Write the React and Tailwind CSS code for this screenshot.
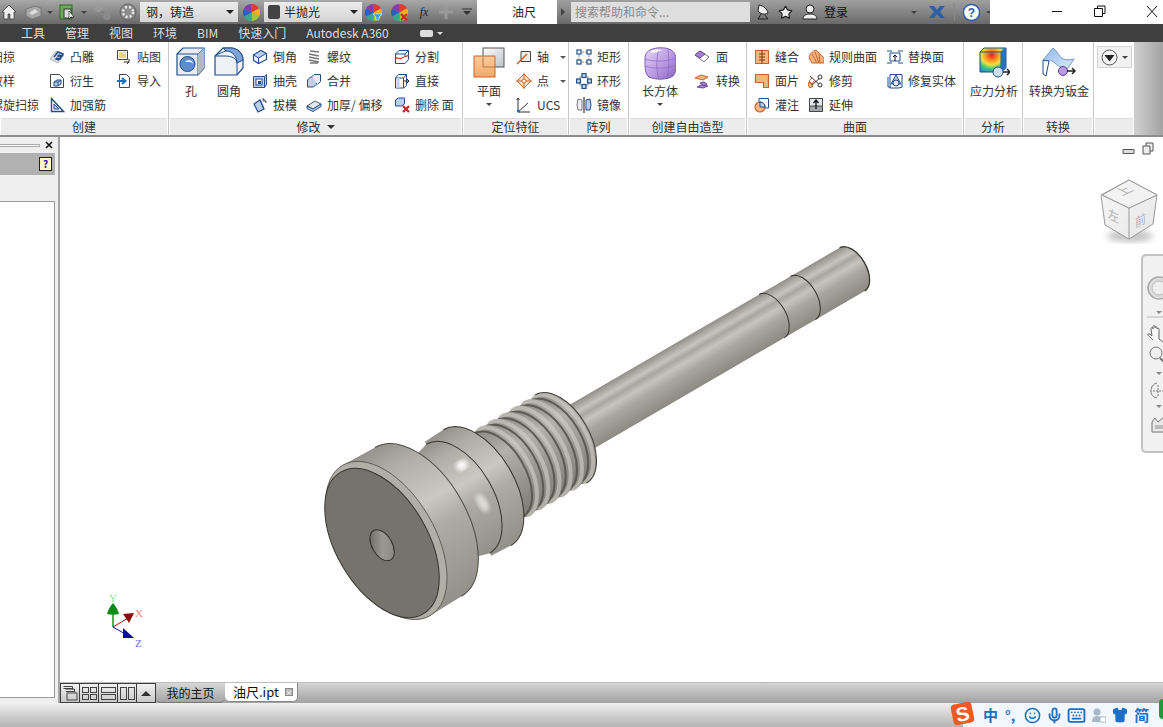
import React from "react";
import { Smile, Mic, Keyboard, Shirt, Star } from "lucide-react";

const B = "#1f4e8c", L = "#bcd0ea", O = "#c9652b", OF = "#f6b47f", G = "#8a8a8a";
const S = ({ s = 16, children, className = "" }) => (
  <svg width={s} height={s} viewBox={`0 0 ${s} ${s}`} className={"shrink-0 " + className} fill="none">{children}</svg>
);

const I = {
  emboss: <S><path d="M1 10l6-8 8 4-6 8z" fill="#dfe4ea" stroke="#888" strokeWidth=".6" /><path d="M5 8l4-5 5 2-1 2-3-1-1 1 3 1-1 2-3-1-1 1 3 1" stroke={B} strokeWidth="1.5" /></S>,
  derive: <S><path d="M1.5 1.5h9l4 4v9h-13z" fill="#fff" stroke="#444" /><path d="M5 9l3-2h4v4l-3 2H5z" fill={L} stroke={B} /><path d="M5 9h4v4M9 9l3-2" stroke={B} /></S>,
  rib: <S><path d="M2.5 1.5v13h12z" fill="#fff" stroke={B} strokeWidth="1.4" /><path d="M5 7v5h5z" fill={L} stroke={B} /></S>,
  decal: <S><path d="M1.5 1.5h10v9h-10z" fill="#fff" stroke="#444" /><rect x="3" y="3" width="7" height="6" fill="#e8d879" /><circle cx="8" cy="4.5" r="1.4" fill="#fff" stroke="#999" strokeWidth=".5" /><path d="M8 13h5m0-3v3m-2 2l2-2" stroke="#222" /></S>,
  imp: <S><path d="M3.5 1.5h7l3 3v10h-10z" fill="#fff" stroke="#444" /><path d="M1 8h7M6 5l3.5 3L6 11" stroke="#1f6fc0" strokeWidth="2" /></S>,
  chamfer: <S><path d="M1.5 6L9 1.5l5.5 3v6L6.5 14.5l-5-3z" fill="#f4f6f9" stroke={B} strokeWidth="1.2" /><path d="M1.5 6l5 3L14 4.5 9 1.5z" fill={L} stroke={B} /><path d="M6.5 9v5.5" stroke={B} /></S>,
  thread: <S><path d="M4 2l9 1M3 5l10 2M3 8l10 2M3 11l10 2M4 14l8-0" stroke="#777" strokeWidth="1.5" /></S>,
  split: <S><path d="M1.5 5L5 1.5h9.5v9L11 14.5H1.5z" fill="#fff" stroke={B} /><path d="M1.5 5H11l3.5-3.5M11 5v3" stroke={B} /><path d="M1 10c3-3 4 1 7-1s4-1 7-3" stroke="#d0302a" strokeWidth="1.2" /></S>,
  shell: <S><path d="M1.5 3.5h11v11h-11zM12.5 3.5l2-2v10l-2 3" fill={L} stroke={B} /><rect x="4" y="6" width="6" height="6" fill="#fff" stroke={B} /><rect x="6" y="8" width="3" height="3" fill={B} /></S>,
  combine: <S><path d="M1.5 7l3-3h6v7l-3 3h-6z" fill={L} stroke={B} /><path d="M6 3.5l2-2h6.5v7l-3 3" fill="#e6edf6" stroke={B} /></S>,
  direct: <S><path d="M1.5 5l3-3.5h8v11l-3 2.5h-8z" fill="#fff" stroke={B} /><path d="M1.5 5h8v10M9.5 5l3-3.5" stroke={B} /><path d="M4 5v10" stroke={L} strokeWidth="3" /><path d="M10 8h5m-2-2l2 2-2 2" stroke="#222" /></S>,
  draft: <S><path d="M2 7l6-4 4 9-6 3z" fill={L} stroke={B} strokeWidth="1.2" /><path d="M8 3l4 9" stroke={B} /><path d="M11 2c2 1 3 2 3 4" stroke="#333" /><path d="M11 1v3h3" stroke="#333" strokeWidth=".7" /></S>,
  thick: <S><path d="M1 9l8-5 6 3-8 5z" fill="#e0e8f2" stroke="#555" /><path d="M1 9v2.5l6 3 8-5V7l-8 5z" fill={L} stroke={B} /></S>,
  del: <S><path d="M1.5 3l3-2h6v6l-3 2h-6z" fill={L} stroke={B} /><path d="M9 9l6 6M15 9l-6 6" stroke="#d0202a" strokeWidth="2.2" /></S>,
  axis: <S><path d="M5 2.5h9.5v10H5" fill="#eee" stroke="#444" /><path d="M5 2.5v10" stroke="#444" /><path d="M1 15L11 5" stroke={O} strokeWidth="1.6" /></S>,
  point: <S><path d="M8 1l7 7-7 7-7-7z" fill="#fbe2c8" stroke={O} /><path d="M0 8h16M8 0v16" stroke={O} /><circle cx="8" cy="8" r="2" fill="#fff" stroke={O} /></S>,
  ucs: <S><path d="M2 15V2M2 15h12M2 15L12 6" stroke="#333" /><circle cx="2.5" cy="14" r="1.5" fill="#2068c8" /><path d="M.5 3L2 1l1.5 2" stroke="#333" /></S>,
  rect: <S><path d="M3 3h10M3 13h10M3 3v10M13 3v10" stroke="#888" strokeDasharray="2 1" /><g fill="#fff" stroke={B} strokeWidth="1.2"><rect x="1" y="1" width="4" height="4" /><rect x="11" y="1" width="4" height="4" /><rect x="1" y="11" width="4" height="4" /><rect x="11" y="11" width="4" height="4" /></g></S>,
  circ: <S><circle cx="8" cy="8" r="5.5" stroke="#777" /><g fill={L} stroke={B} strokeWidth="1.2"><rect x="6" y="0.5" width="4" height="4" /><rect x="0.5" y="6" width="4" height="4" /><rect x="11.5" y="6" width="4" height="4" /><rect x="6" y="11.5" width="4" height="4" /></g></S>,
  mirror: <S><path d="M8 0v16" stroke="#111" /><path d="M6 3L2 2 1 8l1 5h4z" fill="#eef" stroke="#777" /><path d="M10 3l4-1 1 6-1 5h-4z" fill={L} stroke={B} /></S>,
  face: <S><path d="M1 6l5-4 9 6-5 5z" fill="#fff" stroke="#777" /><path d="M1 6l5-4 5 3-5 4z" fill="#a77fd0" stroke="#6b4a9a" /></S>,
  convert: <S><path d="M1 5l6-3 7 2-5 3z" fill={OF} stroke={O} /><path d="M6 10l4-1 3 2-3 2z" fill="#a77fd0" stroke="#6b4a9a" /><path d="M3 14l4-2 7 1-5 2z" fill="#a77fd0" stroke="#6b4a9a" /></S>,
  stitch: <S><rect x="1.5" y="1.5" width="13" height="13" fill={OF} stroke={O} /><path d="M8 1v14M5 5h6M5 8h6M5 11h6" stroke="#7a3a10" /></S>,
  patch: <S><path d="M1.5 1.5h13v13h-5v-5h-8z" fill={OF} stroke={O} strokeWidth="1.2" /></S>,
  sculpt: <S><circle cx="6" cy="10" r="5" fill={OF} stroke={O} strokeWidth="1.2" /><path d="M5 1.5h9.5V11H11A5 5 0 0 0 5 5.2z" fill="#fff" stroke={B} /><path d="M6 5a5 5 0 0 1 5 5H6z" fill={L} stroke={B} /></S>,
  ruled: <S><path d="M1 9C2 4 5 2 8 1l8 8v5H4z" fill={OF} stroke={O} /><path d="M4 5l5 9M7 3l4 11M11 5l1 9" stroke={O} /></S>,
  trim: <S><path d="M2 14L14 3M2 3l12 11" stroke="#333" /><circle cx="12" cy="12" r="2" fill="#fff" stroke="#333" /><circle cx="12" cy="4" r="2" fill="#fff" stroke="#333" /><path d="M1 9l4 4-3 2-2-3z" fill={OF} stroke={O} /><path d="M4 5L1 8l3 3 2-3" stroke={O} /></S>,
  extend: <S><rect x="1.5" y="1.5" width="13" height="13" fill="#e4e8ee" stroke="#445" /><rect x="1.5" y="9" width="13" height="5.5" fill="#a8a8a8" stroke="#445" /><path d="M8 12V4M5.5 6L8 3l2.5 3" stroke="#111" strokeWidth="1.3" /></S>,
  replace: <S><path d="M3 4h10v8H3z" fill="#fff" stroke={B} /><path d="M0 2h5M11 2h5M0 14h5M11 14h5" stroke={B} /><path d="M8 12V6M6 8l2-2 2 2" stroke="#111" /></S>,
  repair: <S><path d="M3 1.5h12V14L12 15H3z" fill="#fff" stroke={B} /><path d="M1 4v10h3" stroke={B} /><path d="M9 2l-5 9h10z" fill={L} stroke={B} /><circle cx="9" cy="10" r="3" fill="#dfe8f4" stroke={B} /></S>,
};

const SmallItem = ({ icon, text, gap = "gap-[5px]", arrow }) => (
  <div className={"flex items-center h-[24px] whitespace-nowrap " + gap}>
    {I[icon]}
    <span>{text}</span>
    {arrow && <span className="ml-[6px] w-0 h-0 border-x-[3px] border-x-transparent border-t-[3px] border-t-[#555]" />}
  </div>
);

const Col = ({ className = "", children }) => <div className={"flex flex-col shrink-0 " + className}>{children}</div>;

const Large = ({ className = "", icon, label, drop }) => (
  <div className={"flex flex-col items-center shrink-0 " + className}>
    <div className="h-[36px] flex items-start justify-center pt-[2px]">{icon}</div>
    <div className="h-[20px] leading-[20px] whitespace-nowrap">{label}</div>
    {drop && <span className="mt-[2px] w-0 h-0 border-x-[3px] border-x-transparent border-t-[3px] border-t-[#444]" />}
  </div>
);

const Panel = ({ className = "", label, arrow, children, inner = "" }) => (
  <div className={"flex flex-col shrink-0 overflow-hidden border-r border-[#c9c9c9] " + className}>
    <div className={"h-[76px] flex pt-[3px] bg-white " + inner}>{children}</div>
    <div className="h-[17px] mx-[1px] bg-[#ececec] border-t border-[#dcdcdc] flex items-center justify-center gap-[6px] text-[12px] text-[#333]">
      {label}
      {arrow && <span className="w-0 h-0 border-x-[4px] border-x-transparent border-t-[4px] border-t-[#333]" />}
    </div>
  </div>
);

const HoleIcon = (
  <svg width="30" height="30" viewBox="0 0 30 30" fill="none"><path d="M1 7l6-6h21v20l-6 7H1z" fill="#e8ecf2" stroke={B} strokeWidth="1.2" /><path d="M1 7h21l6-6M22 7v21" stroke={B} /><path d="M22 7l6-6v20l-6 7z" fill="#b3b8c2" /><circle cx="11.5" cy="17" r="7.5" fill="#5f8dcc" stroke={B} /><path d="M9 14a6 4 0 0 1 7 0l1 3a5 4 0 0 0-6-2z" fill="#fff" /></svg>
);
const FilletIcon = (
  <svg width="30" height="30" viewBox="0 0 30 30" fill="none"><path d="M1 9L9 1h8c6 0 12 5 12 12v8l-6 7H1z" fill="#eef1f6" stroke={B} strokeWidth="1.2" /><path d="M9 1h8c6 0 12 5 12 12l-6 3c0-7-5-12-11-12z" fill="#7ea4d8" stroke={B} /><path d="M1 9c5-3 8-4 11-5M1 9h10c6 0 12 2 12 7v12" stroke={B} /></svg>
);
const PlaneIcon = (
  <svg width="32" height="32" viewBox="0 0 32 32" fill="none"><rect x="10" y="1" width="21" height="19" fill="url(#pg)" stroke="#555" /><rect x="1" y="9" width="21" height="21" fill="url(#po)" stroke={O} /><path d="M10 9v11h12" stroke="#a87a50" /><defs><linearGradient id="pg" x1="0" y1="0" x2="1" y2="1"><stop stopColor="#fff" /><stop offset="1" stopColor="#bcc2cc" /></linearGradient><linearGradient id="po" x1="0" y1="0" x2="0" y2="1"><stop stopColor="#fbcb9c" /><stop offset="1" stopColor="#f3a868" /></linearGradient></defs></svg>
);
const BoxIcon = (
  <svg width="32" height="33" viewBox="0 0 32 33" fill="none"><defs><linearGradient id="bx" x1="0" y1="0" x2="1" y2="1"><stop stopColor="#e5d6f6" /><stop offset=".6" stopColor="#b593e0" /><stop offset="1" stopColor="#8a63bf" /></linearGradient></defs><path d="M6 3c6-3 16-3 21 0 4 2 5 6 5 12s0 11-3 14c-5 4-18 4-24 1C1 27 1 21 1 15S1 6 6 3z" fill="url(#bx)" stroke="#7e5bb0" /><path d="M1 12c9 3 21 3 31-1M15 2c-3 9-3 21 0 30M24 2c1 9 1 20-1 29M1 19c9 3 21 3 30-1" stroke="#8a6bbf" strokeOpacity=".7" /><path d="M7 4c4-2 8-2 11-1-3 2-8 3-12 3z" fill="#fff" opacity=".8" /></svg>
);
const StressIcon = (
  <svg width="32" height="33" viewBox="0 0 32 33" fill="none"><defs><radialGradient id="st" cx=".45" cy=".3" r=".8"><stop stopColor="#e82020" /><stop offset=".3" stopColor="#f59a20" /><stop offset=".5" stopColor="#f0e040" /><stop offset=".7" stopColor="#40c880" /><stop offset="1" stopColor="#2080e0" /></radialGradient></defs><path d="M2 5l4-4h22v20l-5 4H2z" fill="url(#st)" stroke={B} /><path d="M2 5h21l5-4M23 5v20" stroke={B} /><path d="M23 5l5-4v20l-5 4z" fill="#2a70c0" /><circle cx="20" cy="25" r="5" fill="#cfe0f2" stroke={B} /><path d="M25 25h6m-2-3l3 3-3 3" stroke="#222" strokeWidth="1.5" /></svg>
);
const SheetIcon = (
  <svg width="34" height="33" viewBox="0 0 34 33" fill="none"><defs><linearGradient id="sh" x1="0" y1="0" x2="1" y2="1"><stop stopColor="#8fb8e8" /><stop offset="1" stopColor="#dceafa" /></linearGradient></defs><path d="M1 13L11 1c4 2 6 9 10 11 3 1 7 1 11 0l-6 9c-5 1-9-1-13-5-2-2-5-3-7-2z" fill="url(#sh)" stroke="#7a9cc8" /><path d="M1 13l6 1-3 15-3-2z" fill="#fff" stroke={B} /><circle cx="21" cy="24" r="4.5" fill="#b79ae0" stroke="#5a3a9a" /><path d="M25 24h7m-2-3l3 3-3 3" stroke="#222" strokeWidth="1.5" /></svg>
);

const Ribbon = () => (
  <div className="h-[93px] flex text-[12px] text-[#333]">
    <Panel className="w-[169px]" label="创建">
      <Col className="w-[58px] ml-[-9px]">
        <div className="h-[24px] leading-[24px]">扫掠</div>
        <div className="h-[24px] leading-[24px]">放样</div>
        <div className="h-[24px] leading-[24px] whitespace-nowrap">螺旋扫掠</div>
      </Col>
      <Col className="w-[67px]"><SmallItem icon="emboss" text="凸雕" /><SmallItem icon="derive" text="衍生" /><SmallItem icon="rib" text="加强筋" /></Col>
      <Col><SmallItem icon="decal" text="贴图" /><SmallItem icon="imp" text="导入" /></Col>
    </Panel>
    <Panel className="w-[294px]" label="修改" arrow inner="pl-[7px]">
      <Large className="w-[30px] mr-[8px]" icon={HoleIcon} label="孔" />
      <Large className="w-[30px] mr-[8px]" icon={FilletIcon} label="圆角" />
      <Col className="w-[54px]"><SmallItem icon="chamfer" text="倒角" /><SmallItem icon="shell" text="抽壳" /><SmallItem icon="draft" text="拔模" /></Col>
      <Col className="w-[88px]"><SmallItem icon="thread" text="螺纹" /><SmallItem icon="combine" text="合并" /><SmallItem icon="thick" text="加厚/ 偏移" /></Col>
      <Col><SmallItem icon="split" text="分割" /><SmallItem icon="direct" text="直接" /><SmallItem icon="del" text="删除 面" /></Col>
    </Panel>
    <Panel className="w-[106px]" label="定位特征" inner="pl-[10px]">
      <Large className="w-[32px] mr-[11px]" icon={PlaneIcon} label="平面" drop />
      <Col><SmallItem icon="axis" text="轴" arrow /><SmallItem icon="point" text="点" arrow /><SmallItem icon="ucs" text="UCS" /></Col>
    </Panel>
    <Panel className="w-[60px]" label="阵列" inner="pl-[7px]">
      <Col><SmallItem icon="rect" text="矩形" /><SmallItem icon="circ" text="环形" /><SmallItem icon="mirror" text="镜像" /></Col>
    </Panel>
    <Panel className="w-[118px]" label="创建自由造型" inner="pl-[15px]">
      <Large className="w-[32px] mr-[18px]" icon={BoxIcon} label="长方体" drop />
      <Col><SmallItem icon="face" text="面" gap="gap-[6px]" /><SmallItem icon="convert" text="转换" gap="gap-[6px]" /></Col>
    </Panel>
    <Panel className="w-[217px]" label="曲面" inner="pl-[7px]">
      <Col className="w-[54px]"><SmallItem icon="stitch" text="缝合" /><SmallItem icon="patch" text="面片" /><SmallItem icon="sculpt" text="灌注" /></Col>
      <Col className="w-[79px]"><SmallItem icon="ruled" text="规则曲面" /><SmallItem icon="trim" text="修剪" /><SmallItem icon="extend" text="延伸" /></Col>
      <Col><SmallItem icon="replace" text="替换面" /><SmallItem icon="repair" text="修复实体" /></Col>
    </Panel>
    <Panel className="w-[59px]" label="分析" inner="pl-[14px]">
      <Large className="w-[32px]" icon={StressIcon} label="应力分析" />
    </Panel>
    <Panel className="w-[71px]" label="转换" inner="pl-[19px]">
      <Large className="w-[34px]" icon={SheetIcon} label="转换为钣金" />
    </Panel>
    <Panel className="w-[41px]" label="" inner="pl-[3px]">
      <div className="w-[35px] h-[22px] mt-[1px] bg-[#f2f2f2] border border-[#d4d4d4] flex items-center justify-center gap-[4px]">
        <svg width="17" height="17" viewBox="0 0 17 17" fill="none"><circle cx="8.5" cy="8.5" r="7.5" fill="#f4f4f4" stroke="#555" /><path d="M3.5 6h10l-5 6.5z" fill="#222" /></svg>
        <span className="w-0 h-0 border-x-[3px] border-x-transparent border-t-[3px] border-t-[#444]" />
      </div>
    </Panel>
    <div className="flex-1 bg-gradient-to-r from-[#cfcfcf] to-[#a3a3a3]" />
  </div>
);

const Caret = () => <span className="block w-0 h-0 border-x-[3px] border-x-transparent border-t-[3px] border-t-[#444]" />;
const Wheel = ({ badge }) => (
  <svg width="17" height="17" viewBox="0 0 17 17" className="shrink-0">
    <path d="M8.5 8.5V0A8.5 8.5 0 0 1 16 4.5z" fill="#e23b2e" /><path d="M8.5 8.5L16 4.5A8.5 8.5 0 0 1 16 12.5z" fill="#f3b21c" /><path d="M8.5 8.5L16 12.5A8.5 8.5 0 0 1 8.5 17z" fill="#a0c83a" /><path d="M8.5 8.5V17A8.5 8.5 0 0 1 1 12.5z" fill="#36a890" /><path d="M8.5 8.5L1 12.5A8.5 8.5 0 0 1 1 4.5z" fill="#2a5fc0" /><path d="M8.5 8.5L1 4.5A8.5 8.5 0 0 1 8.5 0z" fill="#8a3aa8" />
    {badge === "funnel" && <path d="M8 10h9l-3 3v3h-3v-3z" fill="#3aa0e0" stroke="#fff" strokeWidth=".5" />}
    {badge === "x" && <path d="M10 10l6 6M16 10l-6 6" stroke="#d8202a" strokeWidth="2" />}
  </svg>
);
const Combo = ({ className = "", icon, text }) => (
  <div className={"h-[20px] shrink-0 flex items-center pr-[4px] bg-gradient-to-b from-[#ececec] to-[#d4d4d4] text-[12px] text-[#222] whitespace-nowrap " + className}>
    {icon}
    <span className="flex-1">{text}</span>
    <span className="w-0 h-0 border-x-[4px] border-x-transparent border-t-[4px] border-t-[#222]" />
  </div>
);

const TitleBar = () => (
  <div className="h-[24px] flex text-[12px]">
    <div className="w-[477px] shrink-0 bg-gradient-to-b from-[#a8a8a8] to-[#6a6a6a] flex items-center">
      <svg width="16" height="16" viewBox="0 0 16 16" className="ml-[1px] shrink-0"><path d="M1 8l7-7 7 7-2 0v7H9v-5H7v5H3V8z" fill="#f0f0f0" stroke="#333" strokeWidth=".7" /></svg>
      <svg width="18" height="15" viewBox="0 0 18 15" className="ml-[8px] shrink-0"><path d="M1 4l9-3 6 2v8l-9 3-6-3z" fill="#a8a8a8" stroke="#777" /><path d="M4 8l6-4 3 3-6 3z" fill="#ddd" /></svg>
      <span className="ml-[4px]"><Caret /></span>
      <svg width="17" height="17" viewBox="0 0 17 17" className="ml-[6px] shrink-0"><rect x="1" y="1" width="12" height="14" fill="#6fa85a" stroke="#2f6a2a" /><rect x="5" y="5" width="7" height="9" fill="#ddd" stroke="#333" /><path d="M10 7v8l2-2h3z" fill="#fff" stroke="#111" strokeWidth=".6" /></svg>
      <span className="ml-[5px]"><Caret /></span>
      <svg width="19" height="18" viewBox="0 0 19 18" className="ml-[7px] shrink-0"><circle cx="5" cy="5" r="4" fill="#9a9a9a" /><circle cx="13" cy="13" r="4" fill="#8a8a8a" /><path d="M7 8l3 2" stroke="#777" /></svg>
      <svg width="18" height="18" viewBox="0 0 18 18" className="ml-[6px] shrink-0"><circle cx="9" cy="9" r="8" fill="#8c8c8c" stroke="#666" /><circle cx="9" cy="9" r="5" fill="none" stroke="#e8e8e8" strokeWidth="2.5" strokeDasharray="2 2" /></svg>
      <Combo className="w-[98px] ml-[3px] pl-[6px]" text="钢，铸造" />
      <span className="ml-[5px] flex"><Wheel /></span>
      <Combo className="w-[98px] ml-[4px] pl-[4px]" text="半抛光" icon={<span className="w-[12px] h-[14px] mr-[4px] bg-[#444] rounded-[2px]" />} />
      <span className="ml-[3px] flex"><Wheel badge="funnel" /></span>
      <span className="ml-[9px] flex"><Wheel badge="x" /></span>
      <span className="ml-[6px] w-[20px] text-center text-[#222] italic" style={{ fontFamily: "'Liberation Serif',serif" }}>fx</span>
      <svg width="16" height="16" viewBox="0 0 16 16" className="ml-[4px] shrink-0"><path d="M8 1v14M1 8h14" stroke="#9a9a9a" strokeWidth="3" /></svg>
      <svg width="10" height="8" viewBox="0 0 10 8" className="ml-[8px] shrink-0"><path d="M0 1h10" stroke="#333" /><path d="M1 3h8L5 7z" fill="#333" /></svg>
    </div>
    <div className="w-[80px] shrink-0 bg-white text-[#222] flex items-center justify-center pl-[14px]">油尺</div>
    <div className="w-[433px] shrink-0 bg-gradient-to-b from-[#a0a0a0] to-[#6a6a6a] flex items-center whitespace-nowrap">
      <span className="ml-[4px] w-0 h-0 border-y-[4px] border-y-transparent border-l-[4px] border-l-[#444]" />
      <div className="ml-[6px] w-[179px] shrink-0 h-[20px] bg-[#dedede] text-[#888] flex items-center pl-[4px]">搜索帮助和命令...</div>
      <svg width="16" height="16" viewBox="0 0 16 16" className="ml-[6px] shrink-0"><path d="M3 1c5 1 8 4 9 8-3 2-8 1-10-2z" fill="#eee" stroke="#222" /><path d="M5 10l-3 5h10l-3-4" fill="none" stroke="#222" /></svg>
      <Star size={15} className="ml-[6px] shrink-0" fill="#eee" stroke="#222" />
      <svg width="16" height="16" viewBox="0 0 16 16" className="ml-[9px] shrink-0"><circle cx="8" cy="5" r="4" fill="#eee" stroke="#222" /><path d="M1 15c0-4 4-5 7-5s7 1 7 5z" fill="#eee" stroke="#222" /></svg>
      <span className="ml-[6px] text-[#111] shrink-0">登录</span>
      <span className="ml-[63px] shrink-0"><Caret /></span>
      <svg width="16" height="14" viewBox="0 0 16 14" className="ml-[12px] shrink-0"><path d="M0 1h5l3 4 3-4h5l-5 6 5 6h-5L8 9l-3 4H0l5-6z" fill="#2d5fa8" /></svg>
      <span className="ml-[9px] w-px h-[18px] bg-[#888] shrink-0" />
      <svg width="17" height="17" viewBox="0 0 17 17" className="ml-[8px] shrink-0"><circle cx="8.5" cy="8.5" r="8" fill="#fff" stroke="#2d5fa8" strokeWidth="1.4" /><text x="8.5" y="13" fontSize="12" fontWeight="700" textAnchor="middle" fill="#2d5fa8" fontFamily="Liberation Sans">?</text></svg>
      <span className="ml-[6px] shrink-0"><Caret /></span>
    </div>
    <div className="flex-1 bg-white flex items-center">
      <svg width="172" height="24" viewBox="0 0 172 24" className="shrink-0">
        <path d="M62 11.5h10" stroke="#111" />
        <path d="M104.5 8.5h8v8h-8zM107.5 8.5v-2.500h7.500v7.500h-2.500" stroke="#111" fill="none" />
        <path d="M157 6l10 11M167 6l-10 11" stroke="#111" />
      </svg>
    </div>
  </div>
);

const MenuBar = () => (
  <div className="h-[18px] bg-[#3f3f3f] flex items-center pl-[21px] gap-[20px] text-[12px] text-[#dcdcdc] whitespace-nowrap">
    {["工具", "管理", "视图", "环境", "BIM", "快速入门", "Autodesk A360"].map((t) => <span key={t}>{t}</span>)}
    <span className="ml-[11px] flex items-center gap-[4px]">
      <span className="w-[13px] h-[7px] rounded-[2px] bg-[#ddd]" />
      <span className="w-0 h-0 border-x-[3px] border-x-transparent border-t-[3px] border-t-[#ddd]" />
    </span>
  </div>
);

const LeftPanel = () => (
  <div className="w-[60px] shrink-0 bg-[#efefef] border-r-2 border-[#a6a6a6] flex flex-col">
    <div className="h-[16px] flex items-center shrink-0">
      <div className="w-[40px] h-[3px] border-y border-r border-[#aaa] bg-white" />
      <svg width="8" height="8" viewBox="0 0 8 8" className="ml-[5px]"><path d="M1 1l6 6M7 1L1 7" stroke="#111" strokeWidth="1.6" /></svg>
    </div>
    <div className="h-[22px] shrink-0 mr-[3px] bg-[#b1b1b1] flex items-center justify-end pr-[3px]">
      <div className="w-[13px] h-[14px] bg-[#fff8c0] border border-[#222] text-[10px] leading-[12px] font-bold text-center text-[#1a1a9a]">?</div>
    </div>
    <div className="h-[26px] shrink-0" />
    <div className="flex-1 mr-[3px] bg-white border-r border-b border-t border-[#9a9a9a]" />
    <div className="h-[5px] shrink-0" />
  </div>
);

/* local lathe sections: u along the axis, R radius */
const K = 0.56;
const sec = (u0, u1, r0, r1, fill, key) => (
  <path key={key} d={`M${u0} ${-r0}L${u1} ${-r1}A${r1 * K} ${r1} 0 0 1 ${u1} ${r1}L${u0} ${r0}Z`} fill={fill} />
);
const arc = (u, r, key, color = "#34342f", w = 1, op = 1) => (
  <path key={key} d={`M${u} ${-r}A${r * K} ${r} 0 0 1 ${u} ${r}`} stroke={color} strokeWidth={w} fill="none" opacity={op} />
);

const Part = () => {
  const ribs = [];
  const n = 6, s = 129, e = 207, step = (e - s) / n;
  for (let i = n - 1; i >= 0; i--) {
    const a = s + i * step;
    ribs.push(sec(a + step * 0.45, a + step, 49, 51, "url(#rb)", "r" + i));
    ribs.push(arc(a + step - 3, 50, "ra" + i, "#d2d0c8", 4, 0.6));
    ribs.push(sec(a, a + step * 0.45, 47, 47, "url(#rb)", "g" + i));
    ribs.push(arc(a + step * 0.45, 48, "gb" + i, "#55544e", 2, 0.9));
  }
  return (
    <svg width="1103" height="545" viewBox="60 138 1103 545" className="absolute left-0 top-0" fill="none">
      <defs>
        <linearGradient id="cy" x1="0" y1="0" x2="0" y2="1">
          <stop offset="0" stopColor="#918f87" /><stop offset=".2" stopColor="#c6c4bc" /><stop offset=".3" stopColor="#a8a69e" /><stop offset=".43" stopColor="#c6c4bc" /><stop offset=".62" stopColor="#a8a69e" /><stop offset="1" stopColor="#8c8a82" />
        </linearGradient>
        <linearGradient id="rb" x1="0" y1="0" x2="0" y2="1">
          <stop offset="0" stopColor="#8e8c84" /><stop offset=".3" stopColor="#b3b1a9" /><stop offset=".55" stopColor="#a09e96" /><stop offset="1" stopColor="#7f7d75" />
        </linearGradient>
        <linearGradient id="hd" x1="0" y1="0" x2="0" y2="1">
          <stop offset="0" stopColor="#94928a" /><stop offset=".15" stopColor="#afada5" /><stop offset=".42" stopColor="#cac8c0" /><stop offset=".58" stopColor="#adaba3" /><stop offset="1" stopColor="#92908a" />
        </linearGradient>
        <linearGradient id="hl" x1="0" y1="0" x2="1" y2="1">
          <stop offset="0" stopColor="#5f5d57" /><stop offset=".5" stopColor="#9a9890" /><stop offset="1" stopColor="#86847c" />
        </linearGradient>
        <filter id="bl"><feGaussianBlur stdDeviation="2" /></filter>
      </defs>
      <g transform="translate(382 544) rotate(-30.2)">
        {sec(487, 544, 25, 25, "url(#cy)", "t1")}
        {arc(544, 25, "ta", "#34342f", 1.3)}
        {sec(451, 487, 25, 25, "url(#cy)", "t2")}
        {arc(487, 25, "tb")}
        {sec(200, 451, 25, 25, "url(#cy)", "sh")}
        {arc(451, 25, "tc")}
        {ribs}
        {arc(207, 51, "te", "#3f3e39", 1)}
        {sec(114, 121, 48, 48, "#45443f", "dk")}
        {sec(88, 110, 66, 67, "url(#hd)", "c1")}
        {arc(110, 67, "ca")}
        {sec(42, 88, 50, 63, "url(#hd)", "c2")}
        {arc(88, 63, "cb", "#34342f", 1)}
        <ellipse cx="108" cy="-27" rx="6" ry="5" fill="#fff" opacity=".95" filter="url(#bl)" />
        <ellipse cx="107" cy="16" rx="5" ry="10" fill="#e4e4e0" opacity=".85" filter="url(#bl)" />
        {sec(5, 42, 87, 86, "url(#hd)", "h1")}
        {arc(42, 86, "hb", "#4a4a45", 1)}
        <ellipse cx="5" cy="0" rx={87 * K} ry="87" fill="#b0aea5" stroke="#55544e" strokeWidth=".8" />
        <ellipse cx="0" cy="0" rx={82 * K} ry="82" fill="#75736c" stroke="#34342f" />
        <ellipse cx="-1" cy="2" rx="10" ry="17" fill="url(#hl)" stroke="#2f2f2b" />
      </g>
    </svg>
  );
};

const Triad = () => (
  <div className="absolute left-[40px] top-[452px] w-[90px] h-[65px]">
    <svg width="90" height="65" viewBox="0 0 90 65" fill="none">
      <path d="M13 38V22" stroke="#0a9a1a" strokeWidth="1.500" />
      <path d="M7 25c1-4 4-9 6-11 2 2 5 7 6 11-4 1-8 1-12 0z" fill="#0a8a18" />
      <path d="M13 38l15-9" stroke="#a01010" />
      <path d="M23 25l11-1-5 10z" fill="#8b0a0a" />
      <path d="M13 38l14 8" stroke="#1010a8" />
      <path d="M23 49V39l11 10z" fill="#0a0aa0" />
      <text x="9" y="13" fontSize="11" fill="#80e890" fontFamily="Liberation Serif">Y</text>
      <text x="35" y="28" fontSize="11" fill="#f08080" fontFamily="Liberation Serif">X</text>
      <text x="35" y="58" fontSize="11" fill="#7070f0" fontFamily="Liberation Serif">Z</text>
    </svg>
  </div>
);

const ViewCube = () => (
  <div className="absolute right-0 top-0 w-[70px] h-[120px]">
    <svg width="70" height="120" viewBox="1093 138 70 120" fill="none">
      <defs>
        <filter id="cs"><feGaussianBlur stdDeviation="3" /></filter>
        <linearGradient id="cf" x1="0" y1="0" x2="1" y2="1"><stop stopColor="#f8f8f8" /><stop offset="1" stopColor="#e6e6e6" /></linearGradient>
      </defs>
      <ellipse cx="1130" cy="237" rx="23" ry="6" fill="#c4c4c4" filter="url(#cs)" />
      <path d="M1123 150.500h11v4h-11z" fill="#ddd" stroke="#555" />
      <path d="M1143 147h7v8h-7z M1146 147v-3h7v8h-3" stroke="#555" fill="#eee" />
      <path d="M1129 181l28 15-4 29-24 15-24-14-4-30z" fill="url(#cf)" stroke="#9a9a9a" />
      <path d="M1102 196l27 13 28-13M1129 209v31" stroke="#9a9a9a" />
      <path d="M1129 181l28 15-28 13-27-13z" fill="#f2f2f2" stroke="#9a9a9a" />
      <text fontSize="13" fill="#b4b4b4" fontFamily="Liberation Serif, Noto Sans CJK SC, serif" transform="matrix(.95 -.45 .95 .45 1122 197)">上</text>
      <text fontSize="13" fill="#b4b4b4" fontFamily="Liberation Serif, Noto Sans CJK SC, serif" transform="matrix(.85 .42 0 1 1108 219)">左</text>
      <text fontSize="13" fill="#b4b4b4" fontFamily="Liberation Serif, Noto Sans CJK SC, serif" transform="matrix(.85 -.42 0 1 1135 229)">前</text>
    </svg>
  </div>
);

const NavBar = () => (
  <div className="absolute right-0 top-[117px] w-[22px] h-[199px] bg-[#f1f1f1] border-2 border-r-0 border-[#c2c2c2] rounded-l-[5px] overflow-hidden">
    <svg width="22" height="199" viewBox="0 0 22 199" fill="none">
      <circle cx="16" cy="32" r="11" fill="#ddd" stroke="#aaa" strokeWidth="1.500" /><circle cx="16" cy="32" r="7" fill="#eee" stroke="#bbb" />
      <path d="M13 55l3 3 3-3z" fill="#888" /><path d="M4 61h18" stroke="#bbb" />
      <path d="M10 84c-3-3-6-5-5-6 1-1 3 1 4 2l-1-7c0-2 2-2 2 0v-2c0-2 2-2 2 0v1c0-2 2-2 2 0v1c0-1 2-1 2 0v10l4 3" stroke="#666" fill="#f8f8f8" />
      <circle cx="13" cy="97" r="6" stroke="#777" fill="#eee" /><path d="M17 102l5 5" stroke="#777" strokeWidth="2" />
      <path d="M13 116l3 3 3-3z" fill="#888" />
      <path d="M14 127c-4 1-6 4-6 8s2 6 6 7" stroke="#777" /><path d="M15 129v12M10 135h12" stroke="#777" strokeDasharray="2 1" />
      <path d="M13 149l3 3 3-3z" fill="#888" />
      <path d="M9 166l3-4 3 4 7-6v16H9z" fill="#e8e8e8" stroke="#777" /><rect x="12" y="169" width="10" height="4" fill="#bbb" />
    </svg>
  </div>
);

const Btn = ({ children }) => <div className="w-[20px] h-[20px] shrink-0 bg-gradient-to-b from-[#f2f2f2] to-[#c8c8c8] border border-[#3c3c3c] -ml-px flex items-center justify-center first:ml-0">{children}</div>;

const TabBar = () => (
  <div className="h-[20px] shrink-0 flex bg-gradient-to-b from-[#d4d4d4] to-[#a2a2a2] text-[12px] text-[#111]">
    <Btn><svg width="16" height="16" viewBox="0 0 16 16" fill="none" stroke="#444"><path d="M1.500 3.500h9v1M4 6.500h9v1" /><rect x="5" y="8" width="10" height="7" /><path d="M1.500 1.500h9v3M3.500 4h9v3" /></svg></Btn>
    <Btn><svg width="15" height="13" viewBox="0 0 15 13" fill="none" stroke="#444"><rect x=".5" y=".5" width="6" height="5" /><rect x="8.500" y=".5" width="6" height="5" /><rect x=".5" y="7.500" width="6" height="5" /><rect x="8.500" y="7.500" width="6" height="5" /></svg></Btn>
    <Btn><svg width="15" height="13" viewBox="0 0 15 13" fill="none" stroke="#444"><rect x=".5" y=".5" width="14" height="5" /><rect x=".5" y="7.500" width="14" height="5" /></svg></Btn>
    <Btn><svg width="15" height="13" viewBox="0 0 15 13" fill="none" stroke="#444"><rect x=".5" y=".5" width="6" height="12" /><rect x="8.500" y=".5" width="6" height="12" /></svg></Btn>
    <Btn><span className="w-0 h-0 border-x-[5px] border-x-transparent border-b-[5px] border-b-[#333]" /></Btn>
    <div className="w-[67px] ml-[1px] shrink-0 bg-gradient-to-b from-[#d8d8d8] to-[#a4a4a4] rounded-b-[4px] rounded-tl-[2px] border-b border-[#777] flex items-center justify-center">我的主页</div>
    <div className="w-[73px] ml-[1px] h-[19px] shrink-0 bg-white rounded-b-[5px] border-b border-r border-[#888] flex items-center pl-[8px] text-[13px]">
      <span>油尺.ipt</span>
      <span className="ml-[6px] w-[8px] h-[8px] bg-[#bbb] border border-[#888] flex items-center justify-center text-[7px] leading-none text-white">×</span>
    </div>
  </div>
);

const StatusBar = () => (
  <div className="h-[24px] shrink-0 bg-gradient-to-b from-[#f0f0f0] to-[#b4b4b4] flex justify-end relative">
    <div className="w-[200px] bg-[#f2f7fd] flex items-center text-[#1c6fc4] text-[15px] font-bold">
      <span className="ml-[20px]">中</span>
      <span className="ml-[7px] text-[14px] whitespace-nowrap">°,</span>
      <Smile size={17} className="ml-[9px] shrink-0" strokeWidth={2.2} />
      <Mic size={17} className="ml-[5px] shrink-0" strokeWidth={2.6} />
      <Keyboard size={19} className="ml-[4px] shrink-0" strokeWidth={2.4} />
      <svg width="15" height="15" viewBox="0 0 15 15" className="ml-[5px] shrink-0"><circle cx="6" cy="4" r="3.500" fill="#a8b8c8" /><path d="M1 14c0-4 2-6 5-6s5 2 5 6z" fill="#a8b8c8" /><rect x="9" y="9" width="6" height="5" fill="#fff" stroke="#a8b8c8" /></svg>
      <Shirt size={16} className="ml-[6px] shrink-0" fill="#1c6fc4" />
      <span className="ml-[6px]">简</span>
    </div>
    <div className="absolute right-[188px] top-[-1px] w-[25px] h-[25px] overflow-hidden">
      <div className="w-[21px] h-[21px] mt-[1px] ml-[2px] rounded-[4px] bg-[#ef5a23] -rotate-[12deg] flex items-center justify-center text-white text-[20px] font-black leading-none" style={{ fontFamily: "'Liberation Sans',sans-serif" }}>S</div>
    </div>
    <div className="absolute right-0 top-[-4px] w-[4px] h-[20px] bg-[#1e9a3a] rounded-l-full" />
  </div>
);

export default function App() {
  return (
    <div className="w-[1163px] h-[727px] overflow-hidden flex flex-col bg-white" style={{ fontFamily: "'Noto Sans CJK SC','Liberation Sans',sans-serif" }}>
      <TitleBar />
      <MenuBar />
      <Ribbon />
      <div className="h-[2px] shrink-0 bg-[#8c8c8c]" />
      <div className="flex-1 flex min-h-0">
        <LeftPanel />
        <div className="flex-1 flex flex-col min-w-0">
          <div className="relative flex-1 bg-white overflow-hidden border-b border-[#bdbdbd]">
            <Part />
            <Triad />
            <ViewCube />
            <NavBar />
          </div>
          <TabBar />
        </div>
      </div>
      <StatusBar />
    </div>
  );
}
